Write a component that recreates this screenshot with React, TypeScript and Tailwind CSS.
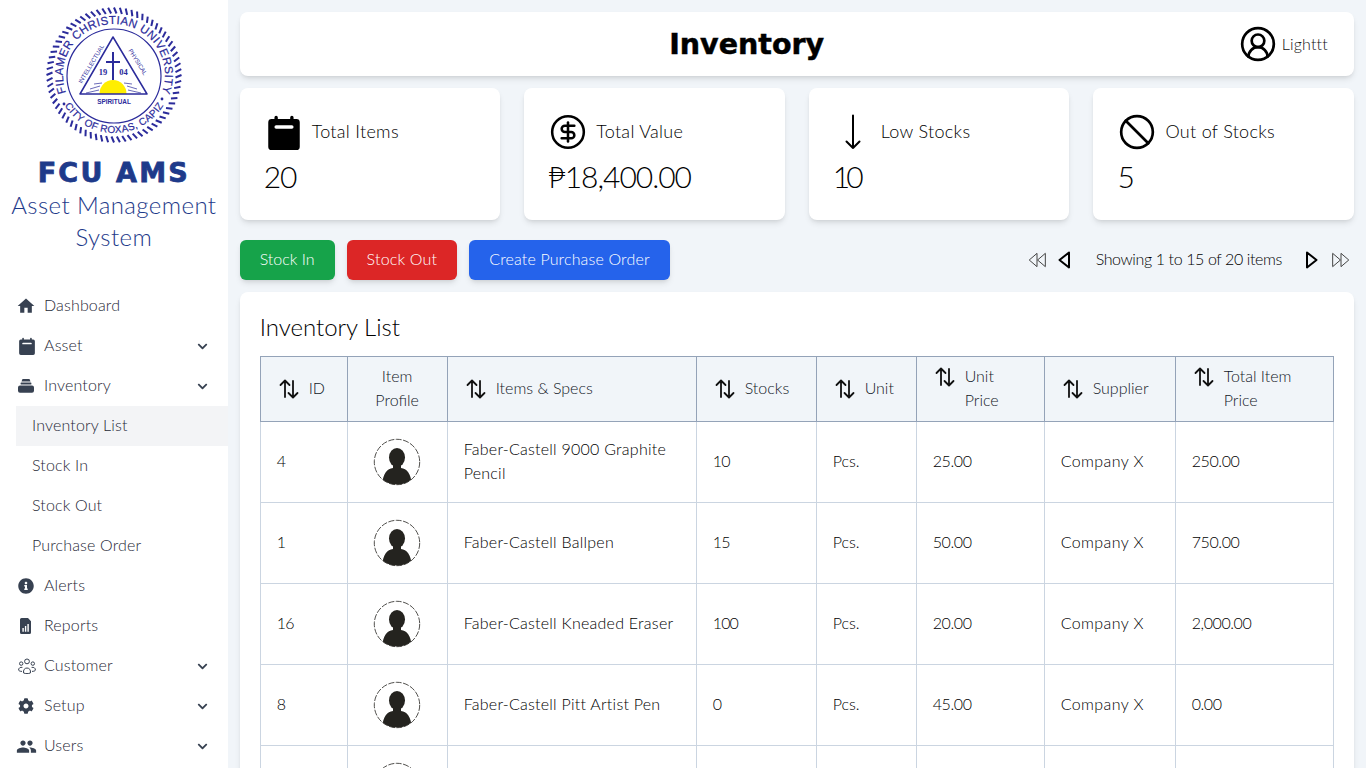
import { FaInfoCircle, FaCog, FaChevronDown } from "react-icons/fa";
import { MdHome, MdPeople } from "react-icons/md";
import { LuBan, LuCircleDollarSign, LuCircleUserRound } from "react-icons/lu";
import type { ReactNode } from "react";

const CalendarIcon = ({ size = 18 }: { size?: number }) => (
  <svg width={size} height={size} viewBox="0 0 32 32" fill="currentColor">
    <path d="M9 1.5a1.5 1.5 0 0 1 1.5 1.5v1.5h11V3a1.5 1.5 0 0 1 3 0v1.5H27a3 3 0 0 1 3 3V29a3 3 0 0 1-3 3H5a3 3 0 0 1-3-3V7.5a3 3 0 0 1 3-3h2.5V3A1.5 1.5 0 0 1 9 1.5zM9 10a1.5 1.5 0 0 0 0 3h14a1.5 1.5 0 0 0 0-3z" fillRule="evenodd" />
  </svg>
);

const LayersIcon = () => (
  <svg width="16" height="16" viewBox="0 0 16 16" fill="currentColor">
    <path d="M4.5 1h7l1 2.6h-9z" />
    <rect x="2.6" y="4.6" width="10.8" height="2" rx="0.6" />
    <path d="M2 7.6h12a2 2 0 0 1 2 2v3.2a2 2 0 0 1-2 2H2a2 2 0 0 1-2-2V9.6a2 2 0 0 1 2-2z" />
  </svg>
);

const ReportIcon = () => (
  <svg width="16" height="16" viewBox="0 0 16 16" fill="currentColor">
    <path fillRule="evenodd" d="M3.5 0H10l3 3.2V14.5A1.5 1.5 0 0 1 11.5 16h-8A1.5 1.5 0 0 1 2 14.5v-13A1.5 1.5 0 0 1 3.5 0zM4.4 10v3.8h1.4V10zm2.5-2v5.8h1.4V8zm2.5-2v7.8h1.4V6z" />
  </svg>
);

const CustomerIcon = () => (
  <svg width="18" height="16" viewBox="0 0 18 16" fill="none" stroke="currentColor" strokeWidth="1">
    <circle cx="9" cy="3.4" r="2.4" />
    <circle cx="3.2" cy="5.6" r="1.7" />
    <circle cx="14.8" cy="5.6" r="1.7" />
    <path d="M5.6 15c-.6-3 1-5 3.4-5s4 2 3.4 5c-2.2 .8-4.6 .8-6.8 0z" />
    <path d="M4.4 9.4C2.2 9 .6 10 .6 12c0 .8 1.6 1.4 3.4 1.4" />
    <path d="M13.6 9.4c2.2-.4 3.8 .6 3.8 2.6 0 .8-1.6 1.4-3.4 1.4" />
  </svg>
);

const LongArrowDown = () => (
  <svg width="20" height="36" viewBox="0 0 20 36" fill="none" stroke="currentColor" strokeWidth="2" strokeLinecap="round" strokeLinejoin="round">
    <path d="M10 1.5V34M3.5 27.5 10 34l6.5-6.5" />
  </svg>
);

const SortIcon = () => (
  <svg width="24" height="24" viewBox="0 0 24 24" fill="none" stroke="currentColor" strokeWidth="1.8" strokeLinecap="round" strokeLinejoin="round" className="shrink-0 text-[#111]">
    <path d="M8 20V4M3.5 8 8 3.5 12.5 8" />
    <path d="M16 4v16M11.5 16l4.5 4.5 4.5-4.5" />
  </svg>
);

const TriLeft = ({ double }: { double?: boolean }) =>
  double ? (
    <svg width="20" height="18" viewBox="0 0 18 16" fill="none" stroke="currentColor" strokeWidth="0.9" strokeLinejoin="round">
      <path d="M9 2 2 8l7 6z" />
      <path d="M16.5 2 9.5 8l7 6z" />
    </svg>
  ) : (
    <svg width="16" height="20" viewBox="0 0 16 20" fill="none" stroke="currentColor" strokeWidth="2" strokeLinejoin="round">
      <path d="M13 2.5 3.5 10l9.5 7.5z" />
    </svg>
  );

const TriRight = ({ double }: { double?: boolean }) =>
  double ? (
    <svg width="20" height="18" viewBox="0 0 18 16" fill="none" stroke="currentColor" strokeWidth="0.9" strokeLinejoin="round">
      <path d="M1.5 2l7 6-7 6z" />
      <path d="M9 2l7 6-7 6z" />
    </svg>
  ) : (
    <svg width="16" height="20" viewBox="0 0 16 20" fill="none" stroke="currentColor" strokeWidth="2" strokeLinejoin="round">
      <path d="M3 2.5l9.5 7.5L3 17.5z" />
    </svg>
  );

const Avatar = () => (
  <svg width="48" height="48" viewBox="0 0 48 48" className="mx-auto">
    <defs>
      <clipPath id="avatarClip">
        <circle cx="24" cy="24" r="22.6" />
      </clipPath>
    </defs>
    <circle cx="24" cy="24" r="22.7" fill="none" stroke="#24231f" strokeWidth="0.8" strokeDasharray="6 1.5" />
    <g fill="#24231f" clipPath="url(#avatarClip)">
      <ellipse cx="24" cy="19.5" rx="8" ry="9.5" />
      <path d="M20 26h8v4c6 1 10 5 11 18H9c1-13 5-17 11-18z" />
    </g>
  </svg>
);

// drawn seal, the picture has it as a small raster logo
const Seal = () => {
  const ticks = Array.from({ length: 72 }, (_, i) => i * 5);
  const blue = "#2b2b9b";
  const sans = "'Liberation Sans', sans-serif";
  const serif = "'Liberation Serif', serif";
  return (
    <svg width="140" height="140" viewBox="0 0 140 140">
      <defs>
        <path id="sealTop" d="M70 121a51 51 0 1 1 0-102a51 51 0 1 1 0 102" />
        <path id="sealBottom" d="M12 70a58 58 0 0 0 116 0" />
      </defs>
      {ticks.map((a) => (
        <line key={a} x1="70" y1="2.5" x2="72.5" y2="8.5" stroke={blue} strokeWidth="2" transform={`rotate(${a} 70 70)`} />
      ))}
      <circle cx="70" cy="71" r="47" fill="none" stroke={blue} strokeWidth="1.2" />
      <text fontFamily={sans} fontSize="11.5" fill={blue} stroke={blue} strokeWidth="0.2">
        <textPath href="#sealTop" startOffset="50%" textAnchor="middle" textLength="196">FILAMER CHRISTIAN UNIVERSITY</textPath>
      </text>
      <text fontFamily={sans} fontSize="10" fill={blue} stroke={blue} strokeWidth="0.2">
        <textPath href="#sealBottom" startOffset="50%" textAnchor="middle" textLength="118">CITY OF ROXAS, CAPIZ</textPath>
      </text>
      <circle cx="20" cy="99" r="1.4" fill={blue} />
      <circle cx="118" cy="94" r="1.4" fill={blue} />
      <path d="M55.5 89a13.5 14 0 0 1 27 0z" fill="#ffee00" />
      <path d="M36 89 69 32 103 89z" fill="none" stroke={blue} strokeWidth="1.5" strokeLinejoin="round" />
      <path d="M55 85 42 88M56 81 46 84M58 78 50 79M84 85 97 88M83 81 93 84M80 78 88 79" stroke={blue} strokeWidth="0.7" />
      <path d="M69 47V75M62 57H76" stroke={blue} strokeWidth="2" />
      <text x="59" y="70" fontFamily={serif} fontWeight="700" fontSize="8.5" fill={blue} textAnchor="middle">19</text>
      <text x="79.5" y="70" fontFamily={serif} fontWeight="700" fontSize="8.5" fill={blue} textAnchor="middle">04</text>
      <text x="70" y="99" fontFamily={sans} fontWeight="700" fontSize="6.4" fill={blue} textAnchor="middle">SPIRITUAL</text>
      <text fontFamily={sans} fontSize="6" fill={blue} textAnchor="middle" transform="translate(49 60) rotate(-59)">INTELLECTUAL</text>
      <text fontFamily={sans} fontSize="6" fill={blue} textAnchor="middle" transform="translate(92 58) rotate(58)">PHYSICAL</text>
    </svg>
  );
};

type NavItem = { label: string; icon?: ReactNode; chevron?: boolean; active?: boolean };

const nav: NavItem[] = [
  { label: "Dashboard", icon: <MdHome size={20} className="-ml-[2px]" /> },
  { label: "Asset", icon: <CalendarIcon />, chevron: true },
  { label: "Inventory", icon: <LayersIcon />, chevron: true },
  { label: "Inventory List", active: true },
  { label: "Stock In" },
  { label: "Stock Out" },
  { label: "Purchase Order" },
  { label: "Alerts", icon: <FaInfoCircle size={16} /> },
  { label: "Reports", icon: <ReportIcon /> },
  { label: "Customer", icon: <CustomerIcon />, chevron: true },
  { label: "Setup", icon: <FaCog size={16} />, chevron: true },
  { label: "Users", icon: <MdPeople size={21} className="-ml-[2px]" />, chevron: true },
];

const stats = [
  { title: "Total Items", value: "20", track: "tracking-[-1px]", icon: <CalendarIcon size={36} /> },
  { title: "Total Value", value: "₱18,400.00", track: "tracking-[-1px]", icon: <LuCircleDollarSign size={38} strokeWidth={1.6} /> },
  { title: "Low Stocks", value: "10", track: "tracking-[-4px]", icon: <LongArrowDown /> },
  { title: "Out of Stocks", value: "5", track: "tracking-[-1px]", icon: <LuBan size={38} strokeWidth={1.7} /> },
];

const rows = [
  ["4", "Faber-Castell 9000 Graphite Pencil", "10", "Pcs.", "25.00", "Company X", "250.00"],
  ["1", "Faber-Castell Ballpen", "15", "Pcs.", "50.00", "Company X", "750.00"],
  ["16", "Faber-Castell Kneaded Eraser", "100", "Pcs.", "20.00", "Company X", "2,000.00"],
  ["8", "Faber-Castell Pitt Artist Pen", "0", "Pcs.", "45.00", "Company X", "0.00"],
  ["12", "Faber-Castell Polychromos", "5", "Pcs.", "60.00", "Company X", "300.00"],
];

const headCell = "border border-[#94a3b8] bg-[#f1f5f9] px-4 py-2 font-light text-[#111827]";
const bodyCell = "border border-[#cbd5e1] px-4 pt-[15px] pb-[17px] text-black";

function Sortable({ children, top }: { children: ReactNode; top?: boolean }) {
  return (
    <div className={`flex gap-2 text-left ${top ? "items-start" : "items-center"}`}>
      <SortIcon />
      <span className="-translate-y-px">{children}</span>
    </div>
  );
}

export default function App() {
  return (
    <div className="flex h-screen overflow-hidden bg-[#f1f5f9] font-['Lato',sans-serif] font-light">
      <aside className="w-1/6 shrink-0 bg-white">
        <div className="flex justify-center pt-[5px]">
          <Seal />
        </div>
        <div className="mt-[10px] text-center">
          <div className="text-[27px] leading-9 font-bold tracking-[2.2px] text-[#1e3a8a] font-['DejaVu_Sans',sans-serif] [-webkit-text-stroke:0.8px_#1e3a8a]">
            FCU AMS
          </div>
          <div className="-mt-[2px] text-2xl leading-8 tracking-[0.4px] text-[#1e3a8a]">Asset Management System</div>
        </div>
        <nav className="mt-[33px] tracking-[0.15px]">
          {nav.map((n) => (
            <div
              key={n.label}
              className={`flex h-10 items-center text-[#1f2937] ${
                n.icon ? "pl-[18px] pr-[18px]" : `ml-4 pl-4 ${n.active ? "bg-[#f3f4f6]" : ""}`
              }`}
            >
              {n.icon && <span className="flex w-[26px] shrink-0 text-[#374151]">{n.icon}</span>}
              <span className="flex-1 -translate-y-px">{n.label}</span>
              {n.chevron && <FaChevronDown size={11} className="mr-[2px] text-[#374151]" />}
            </div>
          ))}
        </nav>
      </aside>

      <main className="min-w-0 flex-1 px-3 pt-3">
        <header className="flex h-16 items-center rounded-lg bg-white px-6 shadow-md">
          <h1 className="flex-1 pr-[9px] pt-[3px] text-center text-[28.5px] font-bold text-black font-['DejaVu_Sans',sans-serif] [-webkit-text-stroke:0.5px_black]">
            Inventory
          </h1>
          <div className="flex items-center gap-[5px] pr-[2px]">
            <LuCircleUserRound size={38} strokeWidth={1.7} className="text-black" />
            <span className="tracking-[0.2px] text-[#111]">Lighttt</span>
          </div>
        </header>

        <section className="mt-3 grid grid-cols-4 gap-6">
          {stats.map((s) => (
            <div key={s.title} className="h-[132px] rounded-lg bg-white px-6 pt-[26px] shadow-md">
              <div className="flex h-9 items-center gap-2">
                <span className="flex w-10 shrink-0 justify-center text-black">{s.icon}</span>
                <span className="-translate-y-px text-lg tracking-[0.3px] text-black">{s.title}</span>
              </div>
              <div className={`mt-[6px] text-3xl leading-10 text-black ${s.track}`}>{s.value}</div>
            </div>
          ))}
        </section>

        <div className="mt-5 flex items-center justify-between">
          <div className="flex gap-3 text-white">
            <button className="h-10 rounded-md bg-[#16a34a] px-5 pb-[2px] shadow-md">Stock In</button>
            <button className="h-10 rounded-md bg-[#dc2626] px-5 pb-[2px] tracking-[0.2px] shadow-md">Stock Out</button>
            <button className="h-10 rounded-md bg-[#2563eb] px-5 pb-[2px] tracking-[0.15px] shadow-md">Create Purchase Order</button>
          </div>
          <div className="flex items-center pr-[3px] text-black">
            <span className="mr-[9px] text-[#444]"><TriLeft double /></span>
            <TriLeft />
            <span className="ml-[24px] mr-[22px] -translate-y-px tracking-[-0.38px] text-black">Showing 1 to 15 of 20 items</span>
            <TriRight />
            <span className="ml-[11px] text-[#444]"><TriRight double /></span>
          </div>
        </div>

        <section className="mt-3 rounded-lg bg-white p-5 shadow-md">
          <h2 className="-mt-px mb-[13px] text-2xl leading-8 text-black">Inventory List</h2>
          <table className="w-[1073px] table-fixed border-collapse">
            <colgroup>
              <col className="w-[87px]" />
              <col className="w-[100px]" />
              <col className="w-[249px]" />
              <col className="w-[120px]" />
              <col className="w-[100px]" />
              <col className="w-[128px]" />
              <col className="w-[131px]" />
              <col className="w-[158px]" />
            </colgroup>
            <thead>
              <tr className="h-[65px]">
                <th className={headCell}><Sortable>ID</Sortable></th>
                <th className={`${headCell} text-center`}><span className="inline-block -translate-y-px">Item Profile</span></th>
                <th className={headCell}><Sortable>Items &amp; Specs</Sortable></th>
                <th className={headCell}><Sortable>Stocks</Sortable></th>
                <th className={headCell}><Sortable>Unit</Sortable></th>
                <th className={headCell}><Sortable top>Unit Price</Sortable></th>
                <th className={headCell}><Sortable>Supplier</Sortable></th>
                <th className={headCell}><Sortable top>Total Item Price</Sortable></th>
              </tr>
            </thead>
            <tbody>
              {rows.map((r) => (
                <tr key={r[0]} className="h-[81px]">
                  <td className={`${bodyCell} tracking-[-0.8px]`}>{r[0]}</td>
                  <td className="border border-[#cbd5e1] px-4 py-4"><Avatar /></td>
                  <td className={`${bodyCell} tracking-[0.25px]`}>{r[1]}</td>
                  <td className={`${bodyCell} tracking-[-0.8px]`}>{r[2]}</td>
                  <td className={bodyCell}>{r[3]}</td>
                  <td className={`${bodyCell} tracking-[-0.4px]`}>{r[4]}</td>
                  <td className={`${bodyCell} tracking-[0.4px]`}>{r[5]}</td>
                  <td className={`${bodyCell} tracking-[-0.4px]`}>{r[6]}</td>
                </tr>
              ))}
            </tbody>
          </table>
        </section>
      </main>
    </div>
  );
}
